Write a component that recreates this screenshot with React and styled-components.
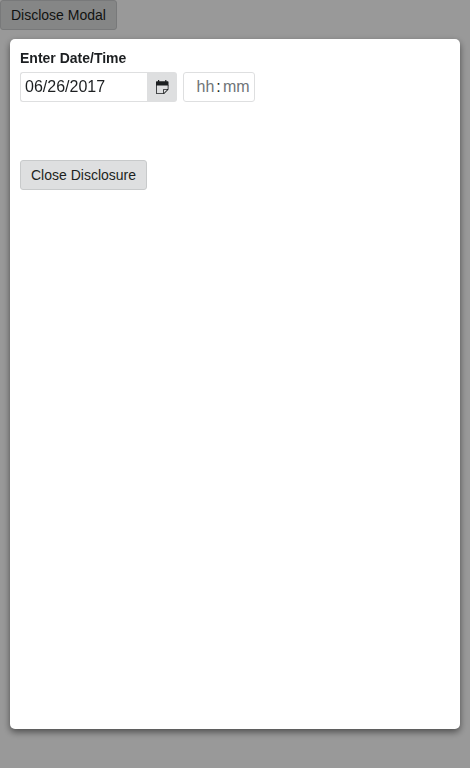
import React from 'react';
import styled, { createGlobalStyle } from 'styled-components';

const GlobalStyle = createGlobalStyle`
  *, *::before, *::after { box-sizing: border-box; }
  html, body { height: 100%; margin: 0; }
  body {
    background: #fff;
    color: #1c1f21;
    font-family: "Liberation Sans", Arial, sans-serif;
    font-size: 14px;
    overflow: hidden;
  }
`;

const Page = styled.main`
  display: flex;
  align-items: flex-start;
`;

const Button = styled.button`
  height: 30px;
  padding: 0 10px;
  border: 1px solid #c8cacb;
  border-radius: 3px;
  background: #dedfe0;
  color: #1c1f21;
  font: 14px/20px "Liberation Sans", Arial, sans-serif;
  white-space: nowrap;
`;

const Overlay = styled.div`
  position: fixed;
  inset: 0;
  display: flex;
  padding: 39px 10px;
  background: rgba(0, 0, 0, 0.4);
`;

const Dialog = styled.section`
  display: flex;
  flex: 1;
  flex-direction: column;
  align-items: flex-start;
  padding: 10px;
  border-radius: 5px;
  background: #fff;
  box-shadow: 0 3px 7px 0 rgba(0, 0, 0, 0.5);
`;

const Heading = styled.h3`
  margin: 0 0 5px;
  font-size: 14px;
  font-weight: 700;
  line-height: 18px;
`;

const Fields = styled.div`
  display: flex;
  gap: 6px;
  margin-bottom: 58px;
`;

const DateField = styled.div`
  display: flex;
  width: 157px;
  height: 30px;
`;

const DateInput = styled.input`
  width: 127px;
  height: 30px;
  padding: 0 4px;
  border: 1px solid #dedfe0;
  border-right: 0;
  border-radius: 3px 0 0 3px;
  outline: 0;
  background: #fff;
  color: #1c1f21;
  font: 16px "Liberation Sans", Arial, sans-serif;
`;

const CalendarButton = styled.button`
  display: flex;
  align-items: center;
  justify-content: center;
  width: 30px;
  height: 30px;
  padding: 0;
  border: 0;
  border-radius: 0 3px 3px 0;
  background: #dedfe0;
  color: #1c1f21;
`;

const TimeField = styled.div`
  display: flex;
  align-items: center;
  width: 72px;
  height: 30px;
  padding-left: 12.5px;
  border: 1px solid #dedfe0;
  border-radius: 3px;
  background: #fff;
  font-size: 16px;
  line-height: 28px;
`;

const TimePart = styled.span`
  width: ${({ $width }) => $width}px;
  color: #6f7477;
`;

const Colon = styled.span`
  width: 6.8px;
`;

function CalendarIcon() {
  return (
    <svg width="14" height="14" viewBox="0 0 14 14" fill="currentColor" aria-hidden="true">
      <path d="M1.7 1.2H3V0h1.2v1.2h6V0h1.2v1.2h1.4c.4 0 .7.3.7.7v3.6H1V1.9c0-.4.3-.7.7-.7Z" />
      <path d="M1 5h.8v7.9c0 .2.1.3.3.3H8v.8H1.7a.7.7 0 0 1-.7-.7ZM12.7 5h.8v4h-.8Z" />
      <path fillRule="evenodd" d="M8.1 14V9.7c0-.4.3-.7.7-.7h4.7v.6L9.1 14ZM8.9 9.8v3.1l3.2-3.1Z" />
    </svg>
  );
}

export default function App() {
  return (
    <>
      <GlobalStyle />
      <Page>
        <Button type="button">Disclose Modal</Button>
      </Page>
      <Overlay>
        <Dialog role="dialog" aria-modal="true">
          <Heading>Enter Date/Time</Heading>
          <Fields>
            <DateField>
              <DateInput type="text" aria-label="Date" defaultValue="06/26/2017" />
              <CalendarButton type="button" aria-label="Open calendar">
                <CalendarIcon />
              </CalendarButton>
            </DateField>
            <TimeField>
              <TimePart $width={19.7}>hh</TimePart>
              <Colon>:</Colon>
              <TimePart $width={28}>mm</TimePart>
            </TimeField>
          </Fields>
          <Button type="button">Close Disclosure</Button>
        </Dialog>
      </Overlay>
    </>
  );
}
